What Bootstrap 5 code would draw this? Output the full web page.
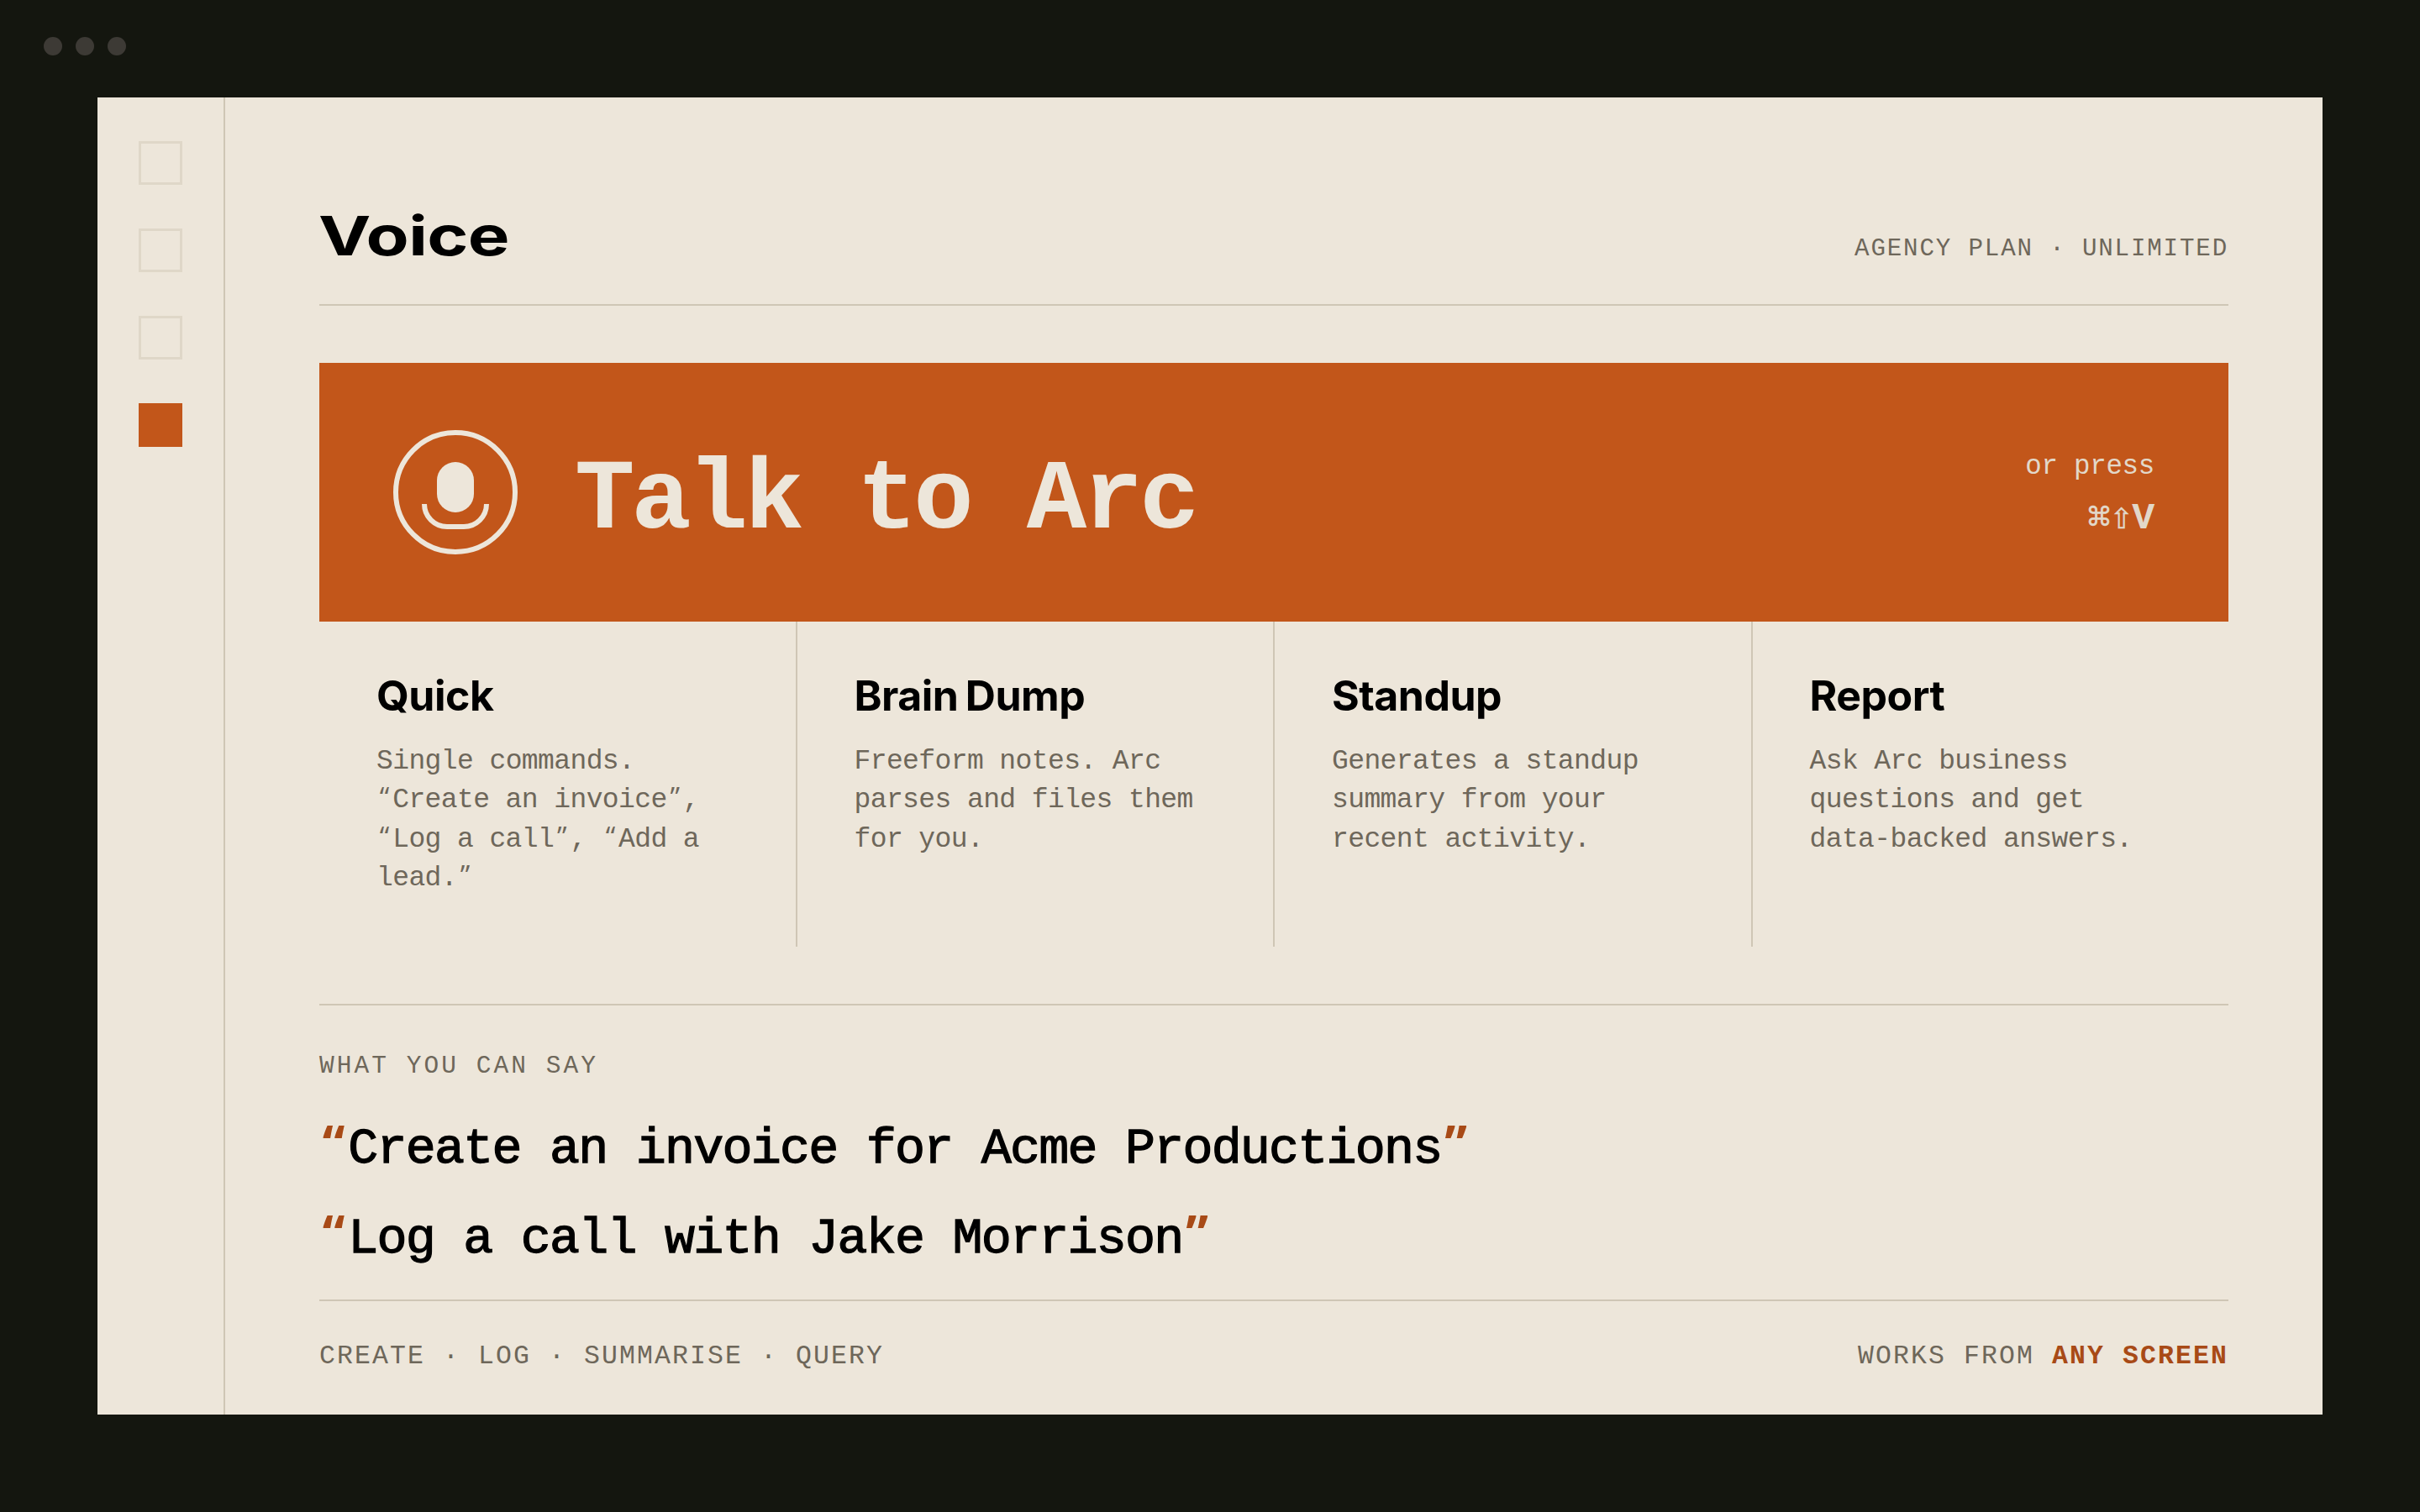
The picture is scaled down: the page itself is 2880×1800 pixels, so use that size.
<!DOCTYPE html>
<html lang="en">
<head>
<meta charset="utf-8">
<title>Voice</title>
<link href="https://cdn.jsdelivr.net/npm/bootstrap@5.3.0/dist/css/bootstrap.min.css" rel="stylesheet">
<script src="https://cdn.jsdelivr.net/npm/bootstrap@5.3.0/dist/js/bootstrap.bundle.min.js"></script>
<style>
:root{--ink:#14160f;--paper:#ede6da;--line:#cfc6b5;--faint:#dfd7c8;--muted:#6e675a;--accent:#c2561a;--accent-dark:#a84a16}
body{background:var(--ink);height:100vh;overflow:hidden;font-family:"Liberation Mono",monospace;color:#000;font-variant-ligatures:none}
.chrome-bar{height:116px;padding:44px 52px;gap:16px}
.dot{width:22px;height:22px;background:#3d3a35}
.pane{margin:0 116px;height:1568px;background:var(--paper)}
.rail{width:152px;border-right:2px solid var(--line);padding-top:52px;gap:52px}
.sq{width:52px;height:52px;border:3px solid var(--faint)}
.sq.on{background:var(--accent);border-color:var(--accent)}
.stage{padding:0 112px}
.head{height:248px;padding-top:125px;border-bottom:2px solid var(--line)}
.head h1{font:700 65px/80px Inter,"Liberation Sans",sans-serif;letter-spacing:-.5px;margin-left:-1px;transform:scaleX(1.285);transform-origin:0 50%}
.plan{font-size:29.2px;line-height:40px;letter-spacing:1.83px;color:var(--muted)}
.hero{height:308px;margin-top:68px;padding:0 88px;background:var(--accent);color:var(--paper)}
.hero-text{font-size:119px;font-weight:700;line-height:140px;letter-spacing:-4.2px;padding-top:21px;margin-left:68px}
.shortcut{color:#e2d8c9;padding-top:8px}
.shortcut .press{font-size:32.5px;line-height:48px;letter-spacing:-.3px}
.shortcut .keys{height:60px;margin-top:8px;font-size:45px;font-weight:700;line-height:59px}
.keys span{width:26.4px;display:flex;justify-content:center}
.keys .sym{font-family:"DejaVu Sans Mono","DejaVu Sans",monospace;font-weight:400;line-height:55px;-webkit-text-stroke:.5px #e2d8c9}
.keys .arrow{line-height:52px}
.modes{display:grid;grid-template-columns:repeat(4,1fr);gap:2px;background:var(--line);height:387px}
.mode{background:var(--paper);padding:58px 68px 0}
.mode h2{font:650 50px/60px Inter,"Liberation Sans",sans-serif;letter-spacing:-.5px;word-spacing:-3px}
.mode p{font-size:33px;line-height:46.4px;letter-spacing:-.6px;color:var(--muted);margin-top:26px;white-space:nowrap}
.q{display:inline-block;width:19.2px;text-align:center;font-family:"Open Sans",sans-serif;line-height:1;letter-spacing:0}
.say{margin-top:68px;border-top:2px solid var(--line);padding-top:52px}
.say-label{font-size:29.5px;line-height:40px;letter-spacing:3.05px;color:var(--muted);margin-bottom:26px}
.phrase{font-size:60px;line-height:107px;height:107px;letter-spacing:-1.76px;-webkit-text-stroke:1.3px #000;white-space:nowrap}
.phrase .q{width:34.25px;color:var(--accent-dark);font-weight:700;-webkit-text-stroke:0}
.foot{height:137px;border-top:2px solid var(--line);padding-top:46px;font-size:31.5px;line-height:40px;letter-spacing:2.1px;color:var(--muted)}
.foot strong{color:var(--accent-dark)}
</style>
</head>
<body>
<div class="chrome-bar d-flex">
  <span class="dot rounded-circle"></span><span class="dot rounded-circle"></span><span class="dot rounded-circle"></span>
</div>
<div class="pane d-flex">
  <nav class="rail d-flex flex-column align-items-center flex-shrink-0">
    <span class="sq"></span><span class="sq"></span><span class="sq"></span><span class="sq on"></span>
  </nav>
  <main class="stage d-flex flex-column flex-grow-1">
    <header class="head d-flex justify-content-between align-items-baseline">
      <h1 class="mt-0 mb-0">Voice</h1>
      <div class="plan">AGENCY PLAN · UNLIMITED</div>
    </header>
    <section class="hero d-flex align-items-center flex-shrink-0">
      <svg width="148" height="148" viewBox="0 0 148 148" fill="none" stroke="#ede6da" stroke-width="6">
        <circle cx="74" cy="74" r="71"/>
        <rect x="52" y="38" width="44" height="60" rx="22" fill="#ede6da" stroke="none"/>
        <path d="M37 88A27 27 0 0 0 64 115H84A27 27 0 0 0 111 88"/>
      </svg>
      <div class="hero-text">Talk to Arc</div>
      <div class="shortcut ms-auto text-end">
        <div class="press">or press</div>
        <div class="keys d-flex justify-content-end"><span class="sym">⌘</span><span class="sym arrow">⇧</span><span>V</span></div>
      </div>
    </section>
    <section class="modes flex-shrink-0">
      <article class="mode"><h2 class="m-0">Quick</h2><p class="mb-0">Single commands.<br><span class="q">“</span>Create an invoice<span class="q">”</span>,<br><span class="q">“</span>Log a call<span class="q">”</span>, <span class="q">“</span>Add a<br>lead.<span class="q">”</span></p></article>
      <article class="mode"><h2 class="m-0">Brain Dump</h2><p class="mb-0">Freeform notes. Arc<br>parses and files them<br>for you.</p></article>
      <article class="mode"><h2 class="m-0">Standup</h2><p class="mb-0">Generates a standup<br>summary from your<br>recent activity.</p></article>
      <article class="mode"><h2 class="m-0">Report</h2><p class="mb-0">Ask Arc business<br>questions and get<br>data-backed answers.</p></article>
    </section>
    <section class="say">
      <div class="say-label">WHAT YOU CAN SAY</div>
      <div class="phrase"><span class="q">“</span>Create an invoice for Acme Productions<span class="q">”</span></div>
      <div class="phrase"><span class="q">“</span>Log a call with Jake Morrison<span class="q">”</span></div>
    </section>
    <footer class="foot d-flex justify-content-between mt-auto">
      <span>CREATE · LOG · SUMMARISE · QUERY</span>
      <span>WORKS FROM <strong>ANY SCREEN</strong></span>
    </footer>
  </main>
</div>
</body>
</html>
